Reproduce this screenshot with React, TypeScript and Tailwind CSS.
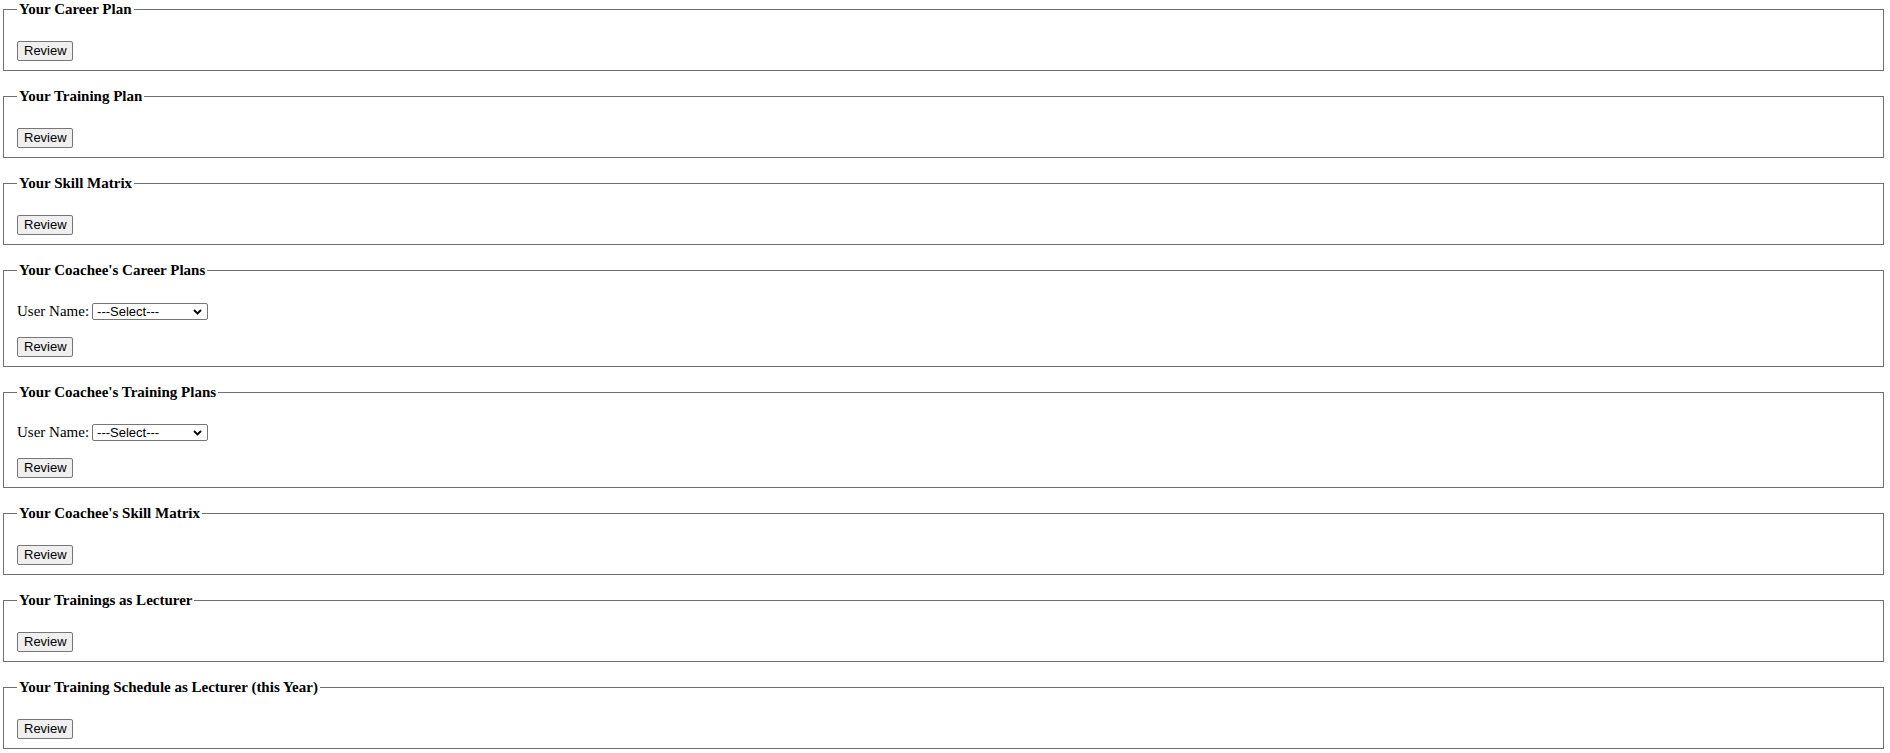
const sections: { title: string; withUser?: boolean }[] = [
  { title: "Your Career Plan" },
  { title: "Your Training Plan" },
  { title: "Your Skill Matrix" },
  { title: "Your Coachee's Career Plans", withUser: true },
  { title: "Your Coachee's Training Plans", withUser: true },
  { title: "Your Coachee's Skill Matrix" },
  { title: "Your Trainings as Lecturer" },
  { title: "Your Training Schedule as Lecturer (this Year)" },
];

function ReviewButton() {
  return (
    <button
      type="button"
      className="h-[20px] w-[56px] rounded-[2px] border border-[#767676] bg-[#efefef] px-[6px] text-[13px] leading-[18px] text-black [font-family:'Liberation_Sans',Arial,sans-serif]"
    >
      Review
    </button>
  );
}

function UserSelect() {
  return (
    <div className="flex h-[18px] items-center text-[15px] text-black [font-family:'Liberation_Serif','Times_New_Roman',serif]">
      <span>User Name:</span>
      <div className="relative ml-[3px]">
        <select
          defaultValue=""
          className="block h-[17px] w-[116px] appearance-none rounded-[2px] border border-[#767676] bg-white pl-[4px] text-[13px] leading-[15px] text-black [font-family:'Liberation_Sans',Arial,sans-serif]"
        >
          <option value="">---Select---</option>
        </select>
        {/* dropdown chevron */}
        <svg
          className="pointer-events-none absolute right-[6px] top-[6px] h-[6px] w-[9px]"
          viewBox="0 0 9 6"
          fill="none"
        >
          <path d="M1 1l3.5 3.5L8 1" stroke="#000" strokeWidth="1.8" />
        </svg>
      </div>
    </div>
  );
}

export default function App() {
  return (
    <main className="flex min-h-screen flex-col gap-[16px] bg-white pl-[3px] pr-[6px]">
      {sections.map((s) => (
        <fieldset key={s.title} className="border border-[#707070] pb-[9px] pl-[13px] pt-[22px]">
          <legend className="px-[2px] text-[15px] font-bold leading-[19px] text-black [font-family:'Liberation_Serif','Times_New_Roman',serif]">
            {s.title}
          </legend>
          <div className="flex flex-col items-start gap-[16.5px]">
            {s.withUser && <UserSelect />}
            <ReviewButton />
          </div>
        </fieldset>
      ))}
    </main>
  );
}
